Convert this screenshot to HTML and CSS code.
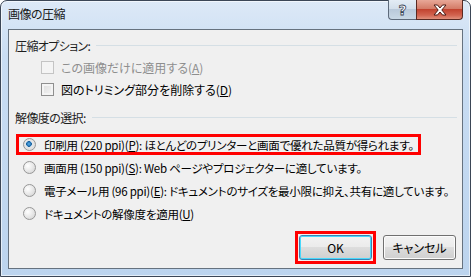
FILE: index.html
```html
<!DOCTYPE html>
<html lang="ja">
<head>
<meta charset="utf-8">
<title>画像の圧縮</title>
<link rel="stylesheet" href="styles.css">
</head>
<body>
<div class="window">
  <div class="titlebar">
    <span class="title">画像の圧縮</span>
    <div class="caption-btns">
      <div class="cap-help"><span class="q">?</span></div>
      <div class="cap-close">
        <svg width="16" height="12" viewBox="0 0 16 12">
          <path d="M2 1h3.5L8 4 10.5 1H14L9.8 6 14 11h-3.5L8 8 5.5 11H2L6.2 6z" fill="#fff" stroke="#4a1a14" stroke-width="1" stroke-linejoin="round"/>
        </svg>
      </div>
    </div>
  </div>
  <div class="client">
    <div class="group-head"><span>圧縮オプション:</span><span class="rule"></span></div>
    <div class="checks">
      <div class="check disabled"><span class="box"></span><span>この画像だけに適用する(<u>A</u>)</span></div>
      <div class="check"><span class="box"></span><span>図のトリミング部分を削除する(<u>D</u>)</span></div>
    </div>
    <div class="group-head"><span>解像度の選択:</span><span class="rule"></span></div>
    <div class="radios">
      <div class="radio-row selected"><span class="radio"></span><span>印刷用 (220 ppi)(<u>P</u>): ほとんどのプリンターと画面で優れた品質が得られます。</span></div>
      <div class="radio-row"><span class="radio"></span><span>画面用 (150 ppi)(<u>S</u>): Web ページやプロジェクターに適しています。</span></div>
      <div class="radio-row"><span class="radio"></span><span>電子メール用 (96 ppi)(<u>E</u>): ドキュメントのサイズを最小限に抑え、共有に適しています。</span></div>
      <div class="radio-row"><span class="radio"></span><span>ドキュメントの解像度を適用(<u>U</u>)</span></div>
    </div>
    <div class="buttons">
      <div class="hl-btn"><button class="btn default">OK</button></div>
      <button class="btn">キャンセル</button>
    </div>
  </div>
</div>
</body>
</html>
```

FILE: styles.css
```css
* { box-sizing: border-box; }
html, body { margin: 0; padding: 0; background: #fff; }
body {
  font-family: "Noto Sans CJK JP", "Noto Sans", sans-serif;
  font-size: 12px;
  color: #000;
}
.window {
  width: 471px;
  height: 277px;
  border: 1px solid #3b4656;
  border-radius: 7px 7px 0 0;
  background: linear-gradient(180deg, #dde9f7 0%, #c9ddf3 20%, #bcd4ee 100%);
  padding: 0 7px 7px;
  display: flex;
  flex-direction: column;
  box-shadow: inset 0 0 0 1px rgba(255,255,255,0.6);
}
.titlebar {
  height: 28px;
  display: flex;
  align-items: flex-start;
  flex: none;
}
.title {
  margin-top: 4px;
  line-height: 18px;
  color: #1a1a1a;
  font-feature-settings: "palt";
  letter-spacing: -0.5px;
  white-space: nowrap;
}
.caption-btns {
  margin-left: auto;
  margin-top: -1px;
  display: flex;
  height: 20px;
}
.cap-help {
  width: 28px;
  height: 20px;
  border: 1px solid #5d6a7b;
  border-top: none;
  border-right: none;
  border-radius: 0 0 0 4px;
  background: linear-gradient(180deg, #e3ecf5 0%, #d3dfeb 45%, #b9c9da 50%, #c9d8e6 100%);
  display: flex;
  align-items: center;
  justify-content: center;
}
.q {
  font-family: "DejaVu Sans", sans-serif;
  font-weight: bold;
  font-size: 14px;
  line-height: 14px;
  color: #fff;
  -webkit-text-stroke: 0.8px #3a4656;
}
.cap-close {
  width: 47px;
  height: 20px;
  border: 1px solid #5a2a22;
  border-top: none;
  border-radius: 0 0 4px 0;
  background: linear-gradient(180deg, #e8a898 0%, #d47c68 45%, #c24430 50%, #d26450 80%, #e0907c 100%);
  display: flex;
  align-items: center;
  justify-content: center;
}
.client {
  flex: 1;
  border: 1px solid #66727f;
  background: #f0f0f0;
  padding: 6px 6px 4px 6px;
  display: flex;
  flex-direction: column;
  white-space: nowrap;
}
.group-head {
  display: flex;
  align-items: center;
  height: 18px;
  color: #1e1e1e;
  font-feature-settings: "palt";
  letter-spacing: -0.6px;
}
.rule {
  flex: 1;
  height: 1px;
  background: #d5dfe5;
  margin-left: 6px;
  margin-right: -1px;
}
.checks {
  display: flex;
  flex-direction: column;
  gap: 4px;
  padding: 4px 0 0 26px;
  margin-bottom: 10px;
}
.check {
  display: flex;
  align-items: center;
  height: 18px;
  gap: 7px;
  font-feature-settings: "palt";
}
.check.disabled { color: #8e8e8e; }
.box {
  width: 13px;
  height: 13px;
  border: 1px solid #8f8f8f;
  background: linear-gradient(135deg, #dcdcdc 0%, #f6f6f6 100%);
  box-shadow: inset 0 0 0 2px #f4f4f4;
  flex: none;
}
.check.disabled .box {
  border-color: #c4c4c4;
  background: #f4f4f4;
  box-shadow: none;
}
.radios {
  display: flex;
  flex-direction: column;
  align-items: flex-start;
  gap: 6px;
  padding: 10px 0 0 8px;
}
.radio-row {
  display: flex;
  align-items: center;
  height: 17px;
  gap: 8px;
  font-size: 11.5px;
  letter-spacing: -0.25px;
  font-feature-settings: "palt";
}
.radio-row.selected {
  outline: 3px solid #f00;
  outline-offset: -1px;
  margin-left: -5px;
  padding-left: 5px;
  padding-right: 5px;
}
.radio {
  width: 13px;
  height: 13px;
  border-radius: 50%;
  border: 1px solid #979797;
  background: radial-gradient(circle at 35% 35%, #ffffff 0%, #e8e8e8 50%, #cfcfcf 100%);
  flex: none;
}
.radio-row.selected .radio {
  background: radial-gradient(circle at 45% 45%, #5ab0ec 0%, #1f6aa8 28%, #1a5d96 30%, #9cc4e6 34%, #e6e6e6 40%, #d8d8d8 100%);
}
.buttons {
  margin-top: auto;
  display: flex;
  justify-content: flex-end;
  align-items: center;
  gap: 7px;
}
.hl-btn {
  border: 3px solid #f00;
  padding: 1px;
}
.btn {
  width: 73px;
  height: 25px;
  font-family: "Noto Sans CJK JP", sans-serif;
  font-size: 12px;
  color: #000;
  border: 1px solid #707070;
  border-radius: 3px;
  background: linear-gradient(180deg, #f2f2f2 0%, #ebebeb 49%, #dddddd 50%, #cfcfcf 100%);
  box-shadow: inset 0 0 0 1px #fcfcfc;
  padding: 0;
  font-feature-settings: "palt";
}
.btn.default {
  border-color: #3c7fb1;
  box-shadow: inset 0 0 0 1px #48d8fb;
}
```
